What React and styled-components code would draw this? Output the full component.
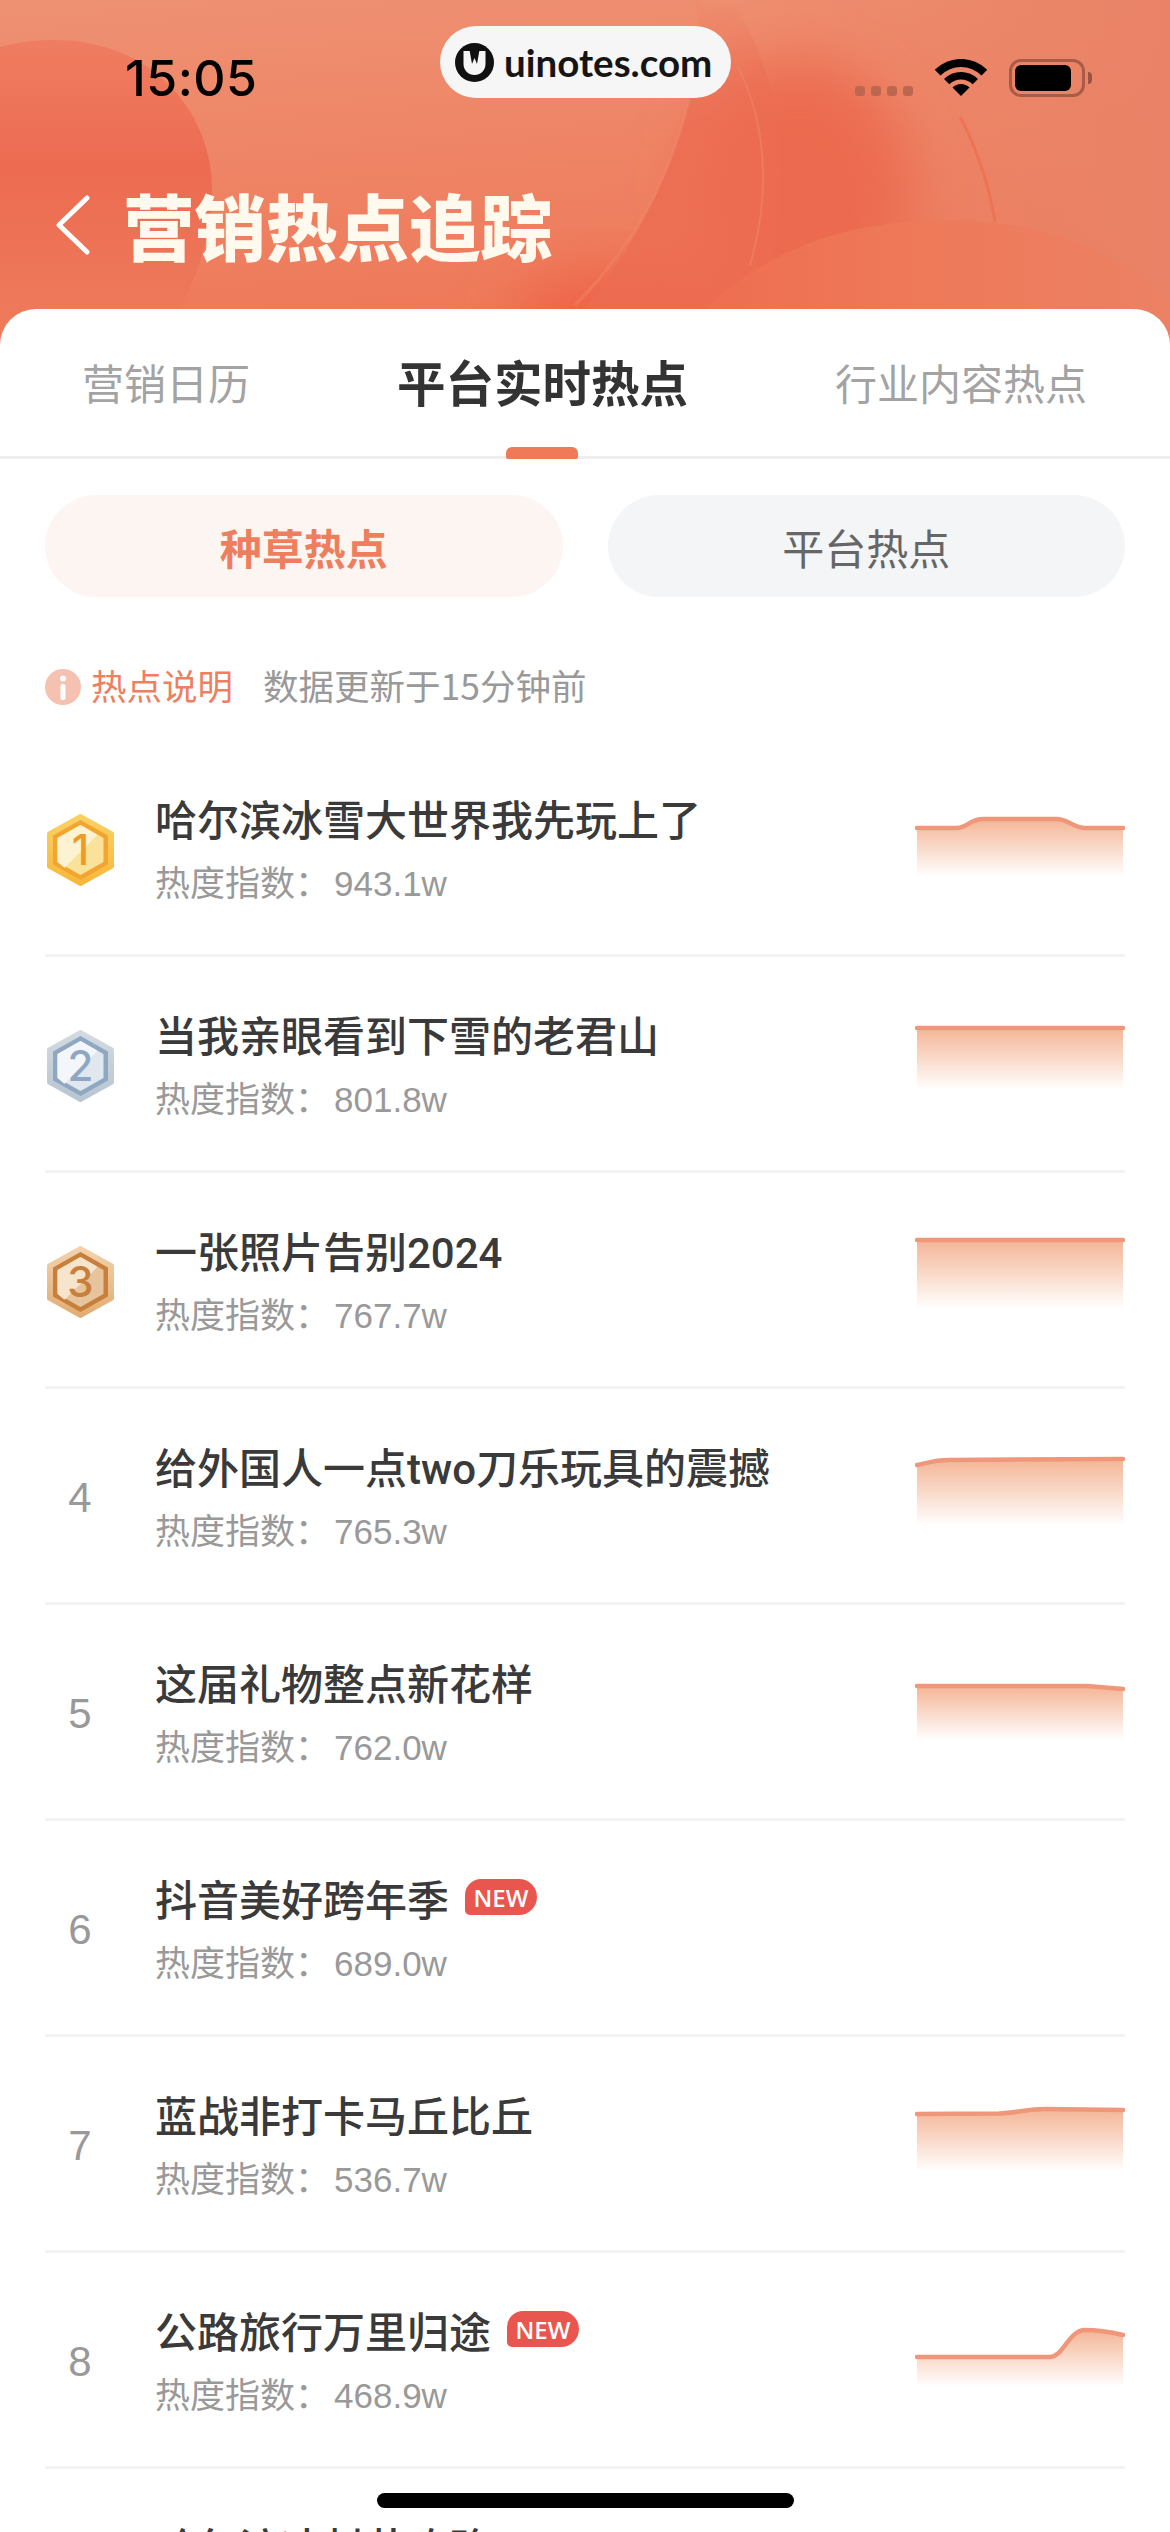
import React from "react";
import styled, { createGlobalStyle } from "styled-components";

const sans = `"Noto Sans CJK SC", "Noto Sans", sans-serif`;
const latin = `"Liberation Sans", "Noto Sans CJK SC", sans-serif`;

const rows = [
  { rank: 1, title: "哈尔滨冰雪大世界我先玩上了", heat: "943.1w", line: "M2 89 L42 89 C52 89 55 80 68 80 L141 80 C154 80 158 89 170 89 L208 89", floor: 136 },
  { rank: 2, title: "当我亲眼看到下雪的老君山", heat: "801.8w", line: "M2 73 L208 73", floor: 133 },
  { rank: 3, title: "一张照片告别2024", heat: "767.7w", line: "M2 69 L208 69", floor: 136 },
  { rank: 4, title: "给外国人一点two刀乐玩具的震撼", heat: "765.3w", line: "M2 78 C12 76 20 73 34 73 L208 72", floor: 137 },
  { rank: 5, title: "这届礼物整点新花样", heat: "762.0w", line: "M2 83 L172 83 L208 86", floor: 136 },
  { rank: 6, title: "抖音美好跨年季", heat: "689.0w", isNew: true },
  { rank: 7, title: "蓝战非打卡马丘比丘", heat: "536.7w", line: "M2 79 L84 78.5 C100 78 114 74 130 74 L208 75", floor: 135 },
  { rank: 8, title: "公路旅行万里归途", heat: "468.9w", isNew: true, line: "M2 106 L135 106 C148 106 154 79 170 79 C180 79 195 81 208 84", floor: 134 },
  { rank: 9, title: "哈尔滨冰封节攻略", heat: "455.2w" },
];

const medals = {
  1: { rim: "#fad164", rimLow: "#f7b83a", ring: "#f2a531", face: "#fbe29a", shine: "#fdf3d2", digit: "#ef9a22" },
  2: { rim: "#d3dae1", rimLow: "#b9c5d1", ring: "#8fa8c2", face: "#e1e7ee", shine: "#f3f6fa", digit: "#8fa8c2" },
  3: { rim: "#f2d2ad", rimLow: "#e2ad74", ring: "#c87f3b", face: "#e6c59d", shine: "#f6e4cc", digit: "#c87f3b" },
};

const GlobalStyle = createGlobalStyle`
  html, body { margin: 0; padding: 0; background: #fff; }
`;

const Page = styled.div`
  position: relative;
  width: 1170px;
  height: 2532px;
  overflow: hidden;
  background: #fff;
  font-family: ${sans};
`;

const Header = styled.header`
  position: relative;
  height: 345px;
`;

const HeaderArt = styled.svg`
  position: absolute;
  inset: 0;
`;

const StatusBar = styled.div`
  position: relative;
  height: 156px;
  display: flex;
  align-items: center;
  justify-content: space-between;
  padding: 0 79px 0 125px;
`;

const Clock = styled.span`
  font-family: "Inter", sans-serif;
  font-size: 50px;
  font-weight: 500;
  letter-spacing: 0.5px;
  color: #000;
`;

const StatusIcons = styled.div`
  display: flex;
  align-items: center;
  margin-top: -1px;
`;

const SignalDots = styled.div`
  display: flex;
  gap: 6px;
  align-self: flex-end;
  margin: 0 22px 1px 0;
`;

const SignalDot = styled.i`
  width: 10px;
  height: 10px;
  border-radius: 3px;
  background: #bd6650;
`;

const Battery = styled.div`
  position: relative;
  width: 76px;
  height: 38px;
  margin: 0 6px 0 22px;
  box-sizing: border-box;
  border: 3px solid #a85c47;
  border-radius: 12px;
  padding: 3px 11px 3px 3px;

  &::after {
    content: "";
    position: absolute;
    right: -10px;
    top: 10px;
    width: 4px;
    height: 12px;
    border-radius: 0 6px 6px 0;
    background: #9a5542;
  }
`;

const BatteryLevel = styled.div`
  height: 100%;
  border-radius: 6px;
  background: #000;
`;

const Watermark = styled.div`
  position: absolute;
  left: 440px;
  top: 26px;
  width: 291px;
  height: 72px;
  box-sizing: border-box;
  border-radius: 36px;
  background: #f6f6f6;
  display: flex;
  align-items: center;
  gap: 10px;
  padding: 0 0 0 15px;
  font-family: "Lato", sans-serif;
  font-size: 38.5px;
  font-weight: 700;
  color: #151515;
`;

const NavBar = styled.div`
  position: relative;
  height: 138px;
  display: flex;
  align-items: center;
  padding-left: 56px;
  gap: 33px;
`;

const Title = styled.h1`
  margin: 0;
  font-size: 71.5px;
  font-weight: 900;
  line-height: 1;
  color: #fff9ee;
`;

const Sheet = styled.main`
  position: relative;
  margin-top: -36px;
  background: #fff;
  border-radius: 36px 36px 0 0;
`;

const Tabs = styled.nav`
  height: 150px;
  box-sizing: border-box;
  display: flex;
  justify-content: space-between;
  padding: 0 83px 0 82px;
  border-bottom: 3px solid #eeeeee;
`;

const Tab = styled.div`
  position: relative;
  display: flex;
  align-items: center;
  padding-bottom: 3px;
  font-size: ${(p) => (p.$active ? "48.5px" : "42px")};
  font-weight: ${(p) => (p.$active ? 700 : 400)};
  color: ${(p) => (p.$active ? "#333" : "#a3a3a3")};

  ${(p) =>
    p.$active &&
    `&::after {
      content: "";
      position: absolute;
      left: calc(50% - 36px);
      bottom: -3px;
      width: 72px;
      height: 12px;
      border-radius: 6px 6px 2px 2px;
      background: #ee7a58;
    }`}
`;

const Filters = styled.div`
  display: flex;
  gap: 45px;
  padding: 36px 45px 0;
`;

const Filter = styled.div`
  flex: 1;
  height: 102px;
  border-radius: 51px;
  display: flex;
  align-items: center;
  justify-content: center;
  font-size: 42px;
  font-weight: ${(p) => (p.$active ? 700 : 400)};
  color: ${(p) => (p.$active ? "#ee7f5e" : "#666")};
  background: ${(p) => (p.$active ? "#fdf5f2" : "#f4f5f7")};
`;

const InfoRow = styled.div`
  display: flex;
  align-items: center;
  height: 36px;
  margin: 72px 45px 36px;
  font-size: 35.5px;
`;

const InfoLabel = styled.span`
  margin: 0 30px 6px 10px;
  color: #ec8060;
`;

const InfoNote = styled.span`
  margin-bottom: 6px;
  color: #999;
`;

const List = styled.div`
  padding: 0 45px;
`;

const Row = styled.div`
  height: 216px;
  box-sizing: border-box;
  padding-top: 4px;
  display: flex;
  align-items: center;
  border-bottom: 3px solid #f3f3f3;
`;

const RankCell = styled.div`
  width: 70px;
  margin-right: 40px;
  display: flex;
  justify-content: center;
  font-family: ${latin};
  font-size: 42px;
  color: #999;
`;

const RowText = styled.div`
  flex: 1;
  min-width: 0;
`;

const RowTitle = styled.div`
  display: flex;
  align-items: center;
  gap: 16px;
  height: 58px;
  box-sizing: border-box;
  padding-bottom: 9px;
  font-family: "Roboto", ${sans};
  font-size: 42px;
  font-weight: 500;
  color: #3a3a3a;
`;

const NewBadge = styled.span`
  width: 72px;
  height: 36px;
  border-radius: 16px 18px 18px 5px;
  background: #e9564f;
  display: flex;
  align-items: center;
  justify-content: center;
  font-family: "Open Sans", sans-serif;
  font-size: 24px;
  font-weight: 600;
  color: #fff;
`;

const RowHeat = styled.div`
  margin-top: 10px;
  height: 46px;
  line-height: 46px;
  font-family: ${latin};
  font-size: 35px;
  color: #999;
`;

const HeatValue = styled.span`
  margin-left: 4px;
`;

const HomeBar = styled.div`
  position: absolute;
  left: 377px;
  bottom: 24px;
  width: 417px;
  height: 15px;
  border-radius: 8px;
  background: #000;
`;

const Art = () => (
  <HeaderArt width="1170" height="345" viewBox="0 0 1170 345">
    <defs>
      <linearGradient id="base" x1="0" y1="0" x2="0.25" y2="1">
        <stop offset="0" stopColor="#ee9173" />
        <stop offset="1" stopColor="#ee7858" />
      </linearGradient>
      <linearGradient id="sideBlob" x1="0" y1="0" x2="0" y2="1">
        <stop offset="0" stopColor="#ef7d61" />
        <stop offset="0.45" stopColor="#ec6b51" />
        <stop offset="1" stopColor="#ee7a5b" />
      </linearGradient>
      <linearGradient id="rightWash" x1="0" y1="0" x2="1" y2="0">
        <stop offset="0" stopColor="#eb8568" stopOpacity="0" />
        <stop offset="1" stopColor="#e98266" />
      </linearGradient>
      <linearGradient id="band" x1="0" y1="0" x2="0" y2="1">
        <stop offset="0" stopColor="#ec6c52" stopOpacity="0" />
        <stop offset="0.4" stopColor="#ec6c52" stopOpacity="0.8" />
        <stop offset="1" stopColor="#ec6c52" stopOpacity="0.8" />
      </linearGradient>
      <linearGradient id="hill" x1="0" y1="0" x2="1" y2="0">
        <stop offset="0" stopColor="#ee6e50" />
        <stop offset="0.5" stopColor="#ee7a5a" />
        <stop offset="1" stopColor="#ec8163" />
      </linearGradient>
      <filter id="soft" x="-40%" y="-40%" width="180%" height="180%">
        <feGaussianBlur stdDeviation="28" />
      </filter>
    </defs>
    <rect width="1170" height="345" fill="url(#base)" />
    <rect x="760" width="410" height="345" fill="url(#rightWash)" />
    <ellipse cx="800" cy="190" rx="110" ry="130" fill="#ec6a50" filter="url(#soft)" />
    <ellipse cx="640" cy="320" rx="130" ry="50" fill="#ee6448" filter="url(#soft)" />
    <path d="M698 0 C705 90 665 215 575 320 L760 320 C790 200 790 80 730 0 Z" fill="url(#band)" />
    <path d="M698 0 C705 90 665 215 575 305" fill="none" stroke="#f08a6c" strokeWidth="3" opacity="0.4" />
    <path d="M738 67 C765 120 772 190 750 265" fill="none" stroke="#f08a6c" strokeWidth="2" opacity="0.5" />
    <path d="M960 117 C978 150 990 190 995 222" fill="none" stroke="#ef6c4e" strokeWidth="3" opacity="0.7" />
    <path d="M-10 50 C15 42 35 40 55 40 C150 40 212 110 212 190 C212 240 195 280 175 320 L-10 320 Z" fill="url(#sideBlob)" />
    <path d="M696 320 C750 260 830 220 950 220 C1050 220 1130 260 1170 300 L1170 345 L696 345 Z" fill="url(#hill)" />
  </HeaderArt>
);

const WifiIcon = () => (
  <svg width="52" height="38" viewBox="-1 0 52 38">
    <path d="M-1.2 10.8 A37 37 0 0 1 51.2 10.8 L45.5 16.5 A29 29 0 0 0 4.5 16.5 Z" fill="#000" />
    <path d="M8 20 A24 24 0 0 1 42 20 L36.7 25.3 A16.5 16.5 0 0 0 13.3 25.3 Z" fill="#000" />
    <path d="M16.5 28.5 A12 12 0 0 1 33.5 28.5 L25 37 Z" fill="#000" />
  </svg>
);

const LogoMark = () => (
  <svg width="39" height="39" viewBox="0 0 39 39">
    <circle cx="19.5" cy="19.5" r="19.5" fill="#111" />
    <path d="M8.5 8 H30.5 V21 C30.5 27.5 25.5 32 19.5 32 C13.5 32 8.5 27.5 8.5 21 Z" fill="#f6f6f6" />
    <path d="M14.5 7 L17 21 L19.5 15 L22 21 L24.5 7 Z" fill="#111" />
  </svg>
);

const InfoIcon = () => (
  <svg width="36" height="36" viewBox="0 0 36 36">
    <circle cx="18" cy="18" r="18" fill="#f5c1b1" />
    <circle cx="18" cy="9.5" r="3" fill="#fff" />
    <rect x="15.5" y="15" width="5" height="16" rx="2" fill="#fff" />
  </svg>
);

const Medal = ({ rank }) => {
  const c = medals[rank];
  return (
    <svg width="67" height="72" viewBox="0 0 67 72">
      <defs>
        <linearGradient id={`rim${rank}`} x1="0" y1="0" x2="0" y2="1">
          <stop offset="0" stopColor={c.rim} />
          <stop offset="1" stopColor={c.rimLow} />
        </linearGradient>
      </defs>
      <path d="M33.5 2 L65 19.5 V52.5 L33.5 70 L2 52.5 V19.5 Z" fill={`url(#rim${rank})`} stroke={`url(#rim${rank})`} strokeWidth="4" strokeLinejoin="round" />
      <path d="M33.5 7 L60 22 V50 L33.5 65 L7 50 V22 Z" fill={c.ring} stroke={c.ring} strokeWidth="2" strokeLinejoin="round" />
      <path d="M33.5 12 L55.5 24.5 V47.5 L33.5 60 L11.5 47.5 V24.5 Z" fill={c.face} stroke={c.face} strokeWidth="2" strokeLinejoin="round" />
      <path d="M33.5 12 L49 21 L17.5 52.5 L11.5 47.5 V24.5 Z" fill={c.shine} stroke={c.shine} strokeWidth="2" strokeLinejoin="round" />
      <text x="33.5" y="51" textAnchor="middle" fontFamily="Inter, sans-serif" fontSize="42" fontWeight="500" fill={c.digit}>
        {rank}
      </text>
    </svg>
  );
};

const Trend = ({ id, line, floor }) => (
  <svg width="210" height="209" viewBox="0 6 210 209">
    <defs>
      <linearGradient id={`trend${id}`} x1="0" y1="0" x2="0" y2="1">
        <stop offset="0" stopColor="#f4b596" />
        <stop offset="1" stopColor="#fffdfc" />
      </linearGradient>
    </defs>
    <path d={`${line} L208 ${floor} L2 ${floor} Z`} fill={`url(#trend${id})`} />
    <path d={line} fill="none" stroke="#f0967a" strokeWidth="4.5" strokeLinecap="round" strokeLinejoin="round" />
  </svg>
);

const App = () => (
  <Page>
    <GlobalStyle />
    <Header>
      <Art />
      <StatusBar>
        <Clock>15:05</Clock>
        <StatusIcons>
          <SignalDots>
            {[0, 1, 2, 3].map((d) => (
              <SignalDot key={d} />
            ))}
          </SignalDots>
          <WifiIcon />
          <Battery>
            <BatteryLevel />
          </Battery>
        </StatusIcons>
      </StatusBar>
      <Watermark>
        <LogoMark />
        uinotes.com
      </Watermark>
      <NavBar>
        <svg width="34" height="60" viewBox="0 0 34 60">
          <path d="M31 3 L3 30 L31 57" fill="none" stroke="#fff" strokeWidth="5" strokeLinecap="round" strokeLinejoin="round" />
        </svg>
        <Title>营销热点追踪</Title>
      </NavBar>
    </Header>
    <Sheet>
      <Tabs>
        <Tab>营销日历</Tab>
        <Tab $active>平台实时热点</Tab>
        <Tab>行业内容热点</Tab>
      </Tabs>
      <Filters>
        <Filter $active>种草热点</Filter>
        <Filter>平台热点</Filter>
      </Filters>
      <InfoRow>
        <InfoIcon />
        <InfoLabel>热点说明</InfoLabel>
        <InfoNote>数据更新于15分钟前</InfoNote>
      </InfoRow>
      <List>
        {rows.map((r) => (
          <Row key={r.rank}>
            <RankCell>{medals[r.rank] ? <Medal rank={r.rank} /> : r.rank}</RankCell>
            <RowText>
              <RowTitle>
                {r.title}
                {r.isNew && <NewBadge>NEW</NewBadge>}
              </RowTitle>
              <RowHeat>
                热度指数：<HeatValue>{r.heat}</HeatValue>
              </RowHeat>
            </RowText>
            {r.line && <Trend id={r.rank} line={r.line} floor={r.floor} />}
          </Row>
        ))}
      </List>
    </Sheet>
    <HomeBar />
  </Page>
);

export default App;
